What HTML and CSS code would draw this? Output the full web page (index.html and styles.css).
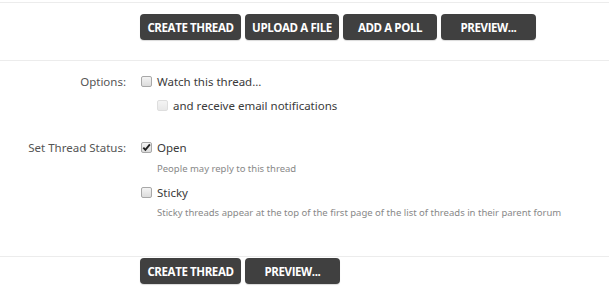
FILE: index.html
```html
<!DOCTYPE html>
<html>
<head>
<meta charset="utf-8">
<link rel="stylesheet" href="styles.css">
</head>
<body>
<div class="bar top">
  <div class="buttons">
    <span class="btn w101">CREATE THREAD</span>
    <span class="btn w94">UPLOAD A FILE</span>
    <span class="btn w94">ADD A POLL</span>
    <span class="btn w95">PREVIEW...</span>
  </div>
</div>
<div class="form">
  <div class="row">
    <div class="label">Options:</div>
    <div class="controls">
      <div class="check"><span class="box"></span><span class="text">Watch this thread...</span></div>
      <div class="check sub"><span class="box disabled"></span><span class="text">and receive email notifications</span></div>
    </div>
  </div>
  <div class="row status">
    <div class="label">Set Thread Status:</div>
    <div class="controls">
      <div class="check"><span class="box checked"><svg viewBox="0 0 11 11" width="11" height="11"><path d="M2.3 5.6 L4.4 7.9 L8.9 2.4" fill="none" stroke="#222" stroke-width="1.9"/></svg></span><span class="text">Open</span></div>
      <div class="hint">People may reply to this thread</div>
      <div class="check second"><span class="box"></span><span class="text">Sticky</span></div>
      <div class="hint last">Sticky threads appear at the top of the first page of the list of threads in their parent forum</div>
    </div>
  </div>
</div>
<div class="bar bottom">
  <div class="buttons">
    <span class="btn w101">CREATE THREAD</span>
    <span class="btn w95">PREVIEW...</span>
  </div>
</div>
</body>
</html>
```
FILE: styles.css
```css
html, body {
  margin: 0;
  padding: 0;
  background: #fff;
}
body {
  font-family: "Noto Sans", "Open Sans", sans-serif;
  color: #444;
  width: 609px;
  height: 300px;
  overflow: hidden;
}
.bar {
  border-top: 1px solid #ececec;
}
.bar.top {
  margin-top: 2px;
  padding: 11px 0 20px 0;
  border-bottom: 1px solid #ececec;
}
.bar.bottom {
  margin-top: 0;
  padding: 1px 0 0 0;
}
.buttons {
  display: flex;
  gap: 4px;
  padding-left: 140px;
}
.btn {
  display: flex;
  align-items: center;
  justify-content: center;
  height: 26px;
  box-sizing: border-box;
  background: #404040;
  color: #fff;
  border-radius: 4px;
  font-family: "Open Sans", sans-serif;
  font-weight: 700;
  font-size: 11.5px;
  letter-spacing: -0.4px;
  box-shadow: 0 1px 1px rgba(0,0,0,0.15);
}
.w101 { width: 101px; }
.w94 { width: 94px; }
.w95 { width: 95px; }

.form {
  padding-top: 14px;
  height: 181px;
}
.row {
  display: grid;
  grid-template-columns: 126px 1fr;
  column-gap: 15px;
}
.row.status {
  margin-top: 28px;
}
.label {
  text-align: right;
  font-size: 11.5px;
  color: #555;
  line-height: 14px;
}
.controls {
  display: flex;
  flex-direction: column;
}
.check {
  display: flex;
  align-items: center;
  height: 14px;
  font-size: 11.5px;
  color: #3a3a3a;
}
.check.sub {
  margin-top: 10px;
  padding-left: 16px;
}
.check.second {
  margin-top: 11px;
}
.box {
  width: 11px;
  height: 11px;
  box-sizing: border-box;
  border: 1px solid #a8a8a8;
  border-radius: 2px;
  background: linear-gradient(#f4f4f4, #dcdcdc);
  margin-right: 5px;
  display: inline-flex;
  position: relative;
  top: -1px;
}
.box svg {
  position: absolute;
  left: -1px;
  top: -1px;
}
.box.disabled {
  border-color: #dedede;
  background: linear-gradient(#f4f4f4, #e8e8e8);
}
.text {
  line-height: 14px;
}
.hint {
  font-size: 9.5px;
  color: #888;
  padding-left: 16px;
  margin-top: 8px;
  line-height: 12px;
}
.hint.last {
  margin-top: 7px;
}
```
